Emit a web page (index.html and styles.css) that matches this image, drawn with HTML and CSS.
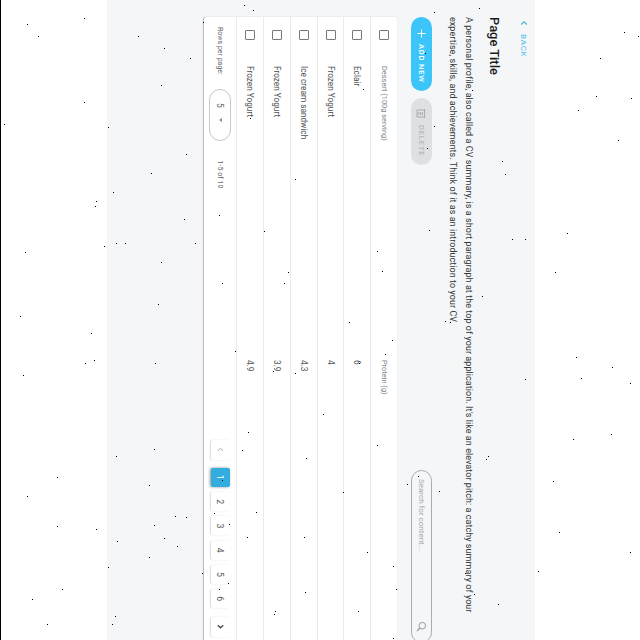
FILE: index.html
```
<!DOCTYPE html>
<html lang="en">
<head>
<meta charset="utf-8">
<title>Page Title</title>
<link rel="stylesheet" href="styles.css">
</head>
<body>
<div class="screen">
  <main class="page">
    <a class="back"><svg width="6" height="8" viewBox="0 0 6 8"><path d="M4.500 1.200L1.800 4l2.700 2.800" fill="none" stroke="#4fb4d8" stroke-width="1.200"/></svg><span>BACK</span></a>
    <h1 class="title">Page Title</h1>
    <p class="intro">A personal profile, also called a CV summary, is a short paragraph at the top of your application. It's like an elevator pitch: a catchy summary of your<br>expertise, skills, and achievements. Think of it as an introduction to your CV.</p>
    <div class="toolbar">
      <button class="btn add"><svg width="9" height="9" viewBox="0 0 9 9"><path d="M4.500 .5v8M.5 4.500h8" stroke="#fff" stroke-width="1"/></svg><span>ADD NEW</span></button>
      <button class="btn delete"><svg width="9" height="10" viewBox="0 0 9 10"><path d="M0 1.500h9M1 1v8h7V1M3 3.500h3M3 5.300h3M3 7.100h3" fill="none" stroke="#a4a6a8" stroke-width=".9"/></svg><span>DELETE</span></button>
      <div class="search"><span>Search for content...</span><svg width="11" height="11" viewBox="0 0 11 11"><path d="M7 7L10 10" stroke="#999b9d" stroke-width="1.200"/><circle cx="4.700" cy="4.700" r="3.300" fill="none" stroke="#999b9d" stroke-width="1" /></svg></div>
    </div>
    <section class="card">
      <div class="row head"><i class="check"></i><span class="name">Dessert (100g serving)</span><span>Protein (g)</span></div>
      <div class="row"><i class="check"></i><span class="name">Eclair</span><span>6</span></div>
      <div class="row"><i class="check"></i><span class="name">Frozen Yogurt</span><span>4</span></div>
      <div class="row"><i class="check"></i><span class="name">Ice cream sandwich</span><span>4.3</span></div>
      <div class="row"><i class="check"></i><span class="name">Frozen Yogurt</span><span>3.9</span></div>
      <div class="row"><i class="check"></i><span class="name">Frozen Yogurt</span><span>4.9</span></div>
      <div class="footer">
        <span class="label">Rows per page:</span>
        <div class="select"><span>5</span><i class="caret"></i></div>
        <span class="range">1-5 of 10</span>
        <nav class="pager">
          <span class="pg prev"><svg width="5" height="7" viewBox="0 0 5 7"><path d="M3.900 .8L1.300 3.500l2.600 2.700" fill="none" stroke="#aaa"/></svg></span>
          <span class="pg active">1</span><span class="pg">2</span><span class="pg">3</span><span class="pg">4</span><span class="pg">5</span><span class="pg">6</span>
          <span class="pg next"><svg width="5" height="7" viewBox="0 0 5 7"><path d="M1.200 .8l2.600 2.700L1.200 6.200" fill="none" stroke="#444" stroke-width="1.200"/></svg></span>
        </nav>
      </div>
    </section>
  </main>
</div>
<svg class="specks" width="640" height="640" viewBox="0 0 640 640" shape-rendering="crispEdges"><path id="dots" fill="#000"/></svg>
<script src="specks.js"></script>
</body>
</html>
```
FILE: styles.css
```
* { box-sizing: border-box; }
html, body { margin: 0; width: 640px; height: 640px; overflow: hidden; background: #fff; }
body { position: relative; font-family: Roboto, "Liberation Sans", sans-serif; }
svg { display: block; flex: none; }
.screen { width: 640px; height: 640px; padding-top: 105px; border-bottom: 1px solid #000; background: #fff; transform: rotate(90deg); overflow: hidden; color: #333638; }
.page { height: 428px; background: #f5f6f8; padding: 5px 0 0 16px; white-space: nowrap; }
.back { display: flex; align-items: center; gap: 8px; height: 12px; padding-left: 4px; font-size: 8px; letter-spacing: .75px; color: #45bfee; }
.title { margin: 16px 0 0 1px; height: 16px; font-size: 12.900px; line-height: 16px; font-weight: 500; color: #191b1d; }
.intro { margin: 9px 0 0 1px; font-size: 9px; line-height: 16px; letter-spacing: .059px; }
.toolbar { display: flex; gap: 7px; margin: 13px 0 0 1px; height: 21px; }
.btn { display: flex; flex: none; align-items: center; border: 0; border-radius: 11px; height: 21px; font: 500 7.600px Roboto, sans-serif; letter-spacing: .8px; }
.add { width: 74px; padding: 0 0 0 12px; gap: 6px; background: #3bc5f9; color: #fff; }
.delete { width: 67px; padding: 0 0 0 11px; gap: 7px; background: #dfe0e2; color: #b7b9bb; }
.search { display: flex; flex: none; align-items: center; justify-content: space-between; width: 173px; margin-left: 298px; padding: 0 10px 0 8px; border: 1px solid #a9abad; border-radius: 11px; font-size: 8px; color: #a6a8aa; }
.card { width: 660px; height: 193px; margin: 14px 0 0 .5px; background: #fff; border-radius: 2px; box-shadow: 0 1px 1px rgba(0,0,0,.25), 0 0 1px rgba(0,0,0,.12); }
.row { display: flex; align-items: center; height: 26.800px; padding-left: 13.500px; border-bottom: 1px solid #ebebeb; font-size: 8.250px; color: #505355; }
.row.head { font-size: 7.400px; color: #848688; }
.check { width: 10px; height: 10px; border: 1px solid #77797b; border-radius: 1px; }
.name { width: 294px; margin-left: 26px; }
.footer { display: flex; align-items: center; height: 32px; padding-left: 10.500px; font-size: 7px; color: #66686a; }
.label { flex: none; width: 62px; }
.select { display: flex; align-items: center; justify-content: space-between; flex: none; width: 52px; height: 22px; padding: 0 18px 0 13px; border: 1px solid #c6c8ca; border-radius: 11px; font-size: 8.500px; }
.caret { border: 2px solid transparent; border-top: 3px solid #8a8c8e; border-bottom: 0; }
.range { flex: none; width: 298.500px; padding-left: 19.500px; letter-spacing: .05px; }
.pager { display: flex; gap: 5.300px; }
.pg { display: flex; flex: none; align-items: center; justify-content: center; width: 19px; height: 19px; border-radius: 2px; background: #fff; box-shadow: 0 1px 1.500px rgba(0,0,0,.15); font-size: 8.700px; color: #505355; }
.prev { width: 20px; margin-right: 3px; }
.next { width: 20px; margin-left: 3px; }
.active { background: #32ade0; color: #fff; box-shadow: 0 1px 3px rgba(0,0,0,.45); }
.specks { position: absolute; left: 0; top: 0; pointer-events: none; }
```
FILE: specks.js
```
const points = "27,24 84,18 38,36 138,36 164,48 190,58 161,85 84,102 4,124 108,127 186,154 151,173 113,192 96,201 95,206 184,219 104,246 116,243 125,243 195,243 25,252 161,262 158,304 20,316 91,333 85,363 94,360 23,375 155,363 154,449 116,456 57,477 149,485 27,496 175,516 186,517 154,525 57,526 96,529 164,538 117,541 177,546 149,557 108,567 62,589 32,599 115,616 112,624 47,624 624,32 638,36 600,58 596,96 631,98 578,110 618,140 502,161 505,174 567,233 512,239 525,239 555,272 576,357 612,367 525,379 581,378 630,383 573,439 611,434 553,481 559,532 630,552 538,571 434,12 479,8 425,53 472,90 434,126 427,148 244,5 253,10 203,22 363,89 250,118 295,179 219,215 248,432 242,450 222,480 256,512 214,513 229,524 247,537 202,573 228,583 219,589 235,351 392,340 385,354 359,363 273,371 295,373 482,296 445,321 450,322 377,445 306,458 343,492 304,537 367,552 393,566 396,589 305,592 275,611 274,614 358,611 393,638 407,484 418,476 439,491 488,456 486,459 465,573 474,594 498,604 377,251 382,271 288,272 284,283 222,283 264,231 349,322 429,230 323,414";
document.getElementById("dots").setAttribute("d", points.split(" ").map(p => `M${p}h1v1h-1z`).join(""));
```
